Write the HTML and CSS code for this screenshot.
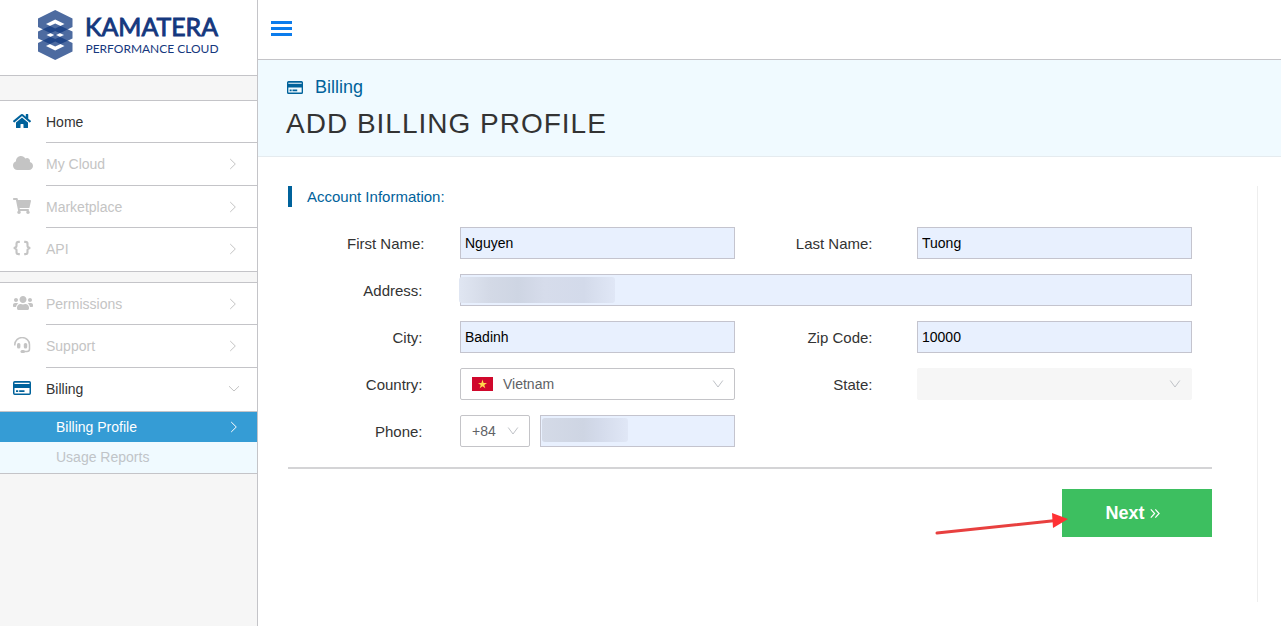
FILE: index.html
```html
<!DOCTYPE html>
<html lang="en">
<head>
<meta charset="utf-8">
<title>Add Billing Profile</title>
<link rel="stylesheet" href="styles.css">
</head>
<body>
<svg width="0" height="0" class="defs">
  <symbol id="card" viewBox="0 0 18 14"><path fill-rule="evenodd" d="M1.7 0H16.3Q18 0 18 1.7V12.3Q18 14 16.3 14H1.7Q0 14 0 12.3V1.7Q0 0 1.7 0ZM1.5 1.8V3H16.5V1.8ZM1.5 7V12.4H16.5V7ZM3 9.2H5.200V11H3ZM6.2 9.2H11.500V11H6.200Z"/></symbol>
  <symbol id="right" viewBox="0 0 8 12"><path d="M1.2 1 6.300 6 1.200 11" fill="none" stroke="currentColor" stroke-width="1"/></symbol>
  <symbol id="down" viewBox="0 0 12 8"><path d="M1 1.200 6 6 11 1.200" fill="none" stroke="currentColor" stroke-width="1"/></symbol>
  <symbol id="arrow" viewBox="0 0 12 10"><path d="M1.2 1.500 6 8 10.800 1.500" fill="none" stroke="currentColor" stroke-width="1"/></symbol>
</svg>
<div class="app">
  <aside class="sidebar">
    <div class="logo">
      <svg width="257" height="75">
        <g fill="#123a80" fill-opacity=".75" fill-rule="evenodd">
          <path d="M38 18.500 55.200 10 72.500 18.500V27L55.200 35.500 38 27ZM46 24 55.200 28.500 64.500 24 55.200 19.500Z"/>
          <path d="M38 31.500 55.200 23.500 72.500 31.500V38.500L55.200 46.500 38 38.500ZM46.500 35 55.200 39 64 35 55.200 31Z"/>
          <path d="M38 43 55.200 34.500 72.500 43V51.500L55.200 60 38 51.500ZM46 46 55.200 50.500 64.500 46 55.200 41.500Z"/>
        </g>
        <text class="brand" x="85" y="36" textLength="133" lengthAdjust="spacingAndGlyphs">KAMATERA</text>
        <text class="tagline" x="85.500" y="53.300" textLength="133" lengthAdjust="spacingAndGlyphs">PERFORMANCE CLOUD</text>
      </svg>
    </div>
    <nav class="group">
      <a class="item on"><svg class="icon" width="18" height="16" viewBox="0 0 576 512"><path d="M280.370 148.260L96 300.110V464a16 16 0 0 0 16 16l112.060-.29a16 16 0 0 0 15.920-16V368a16 16 0 0 1 16-16h64a16 16 0 0 1 16 16v95.640a16 16 0 0 0 16 16.050L464 480a16 16 0 0 0 16-16V300L295.670 148.260a12.190 12.190 0 0 0-15.300 0zM571.600 251.470L488 182.560V44.050a12 12 0 0 0-12-12h-56a12 12 0 0 0-12 12v72.610L318.470 43a48 48 0 0 0-61 0L4.340 251.470a12 12 0 0 0-1.600 16.900l25.500 31A12 12 0 0 0 45.150 301l235.220-193.740a12.190 12.190 0 0 1 15.300 0L530.900 301a12 12 0 0 0 16.900-1.600l25.500-31a12 12 0 0 0-1.700-16.930z"/></svg><span class="name">Home</span></a>
      <a class="item tall"><svg class="icon" width="20" height="16" viewBox="0 0 640 512"><path d="M537.600 226.600c4.100-10.700 6.400-22.400 6.400-34.600 0-53-43-96-96-96-19.700 0-38.100 6-53.300 16.200C367 64.200 315.300 32 256 32c-88.400 0-160 71.600-160 160 0 2.700.1 5.400.2 8.100C40.200 219.800 0 273.200 0 336c0 79.500 64.500 144 144 144h368c70.700 0 128-57.300 128-128 0-61.900-44-113.600-102.400-125.400z"/></svg><span class="name">My Cloud<svg class="chev" width="8" height="12"><use href="#right"/></svg></span></a>
      <a class="item"><svg class="icon" width="18" height="16" viewBox="0 0 576 512"><path d="M528.120 301.319l47.273-208C578.806 78.301 567.391 64 551.990 64H159.208l-9.166-44.810C147.758 8.021 137.930 0 126.529 0H24C10.745 0 0 10.745 0 24v16c0 13.255 10.745 24 24 24h69.883l70.248 343.435C147.325 417.100 136 435.222 136 456c0 30.928 25.072 56 56 56s56-25.072 56-56c0-15.674-6.447-29.835-16.824-40h209.647C430.447 426.165 424 440.326 424 456c0 30.928 25.072 56 56 56s56-25.072 56-56c0-22.172-12.888-41.332-31.579-50.405l5.517-24.276c3.413-15.018-8.002-29.319-23.403-29.319H218.117l-6.545-32h293.145c11.206 0 20.920-7.754 23.403-18.681z"/></svg><span class="name">Marketplace<svg class="chev" width="8" height="12"><use href="#right"/></svg></span></a>
      <a class="item last"><svg class="icon" width="18" height="16" viewBox="0 0 18 16"><path fill="none" stroke="currentColor" stroke-width="2.100" d="M6.800 1.900H5.500Q3.500 1.900 3.500 3.700V6Q3.500 7.500 .8 8 3.500 8.500 3.500 10V12.300Q3.500 14.100 5.500 14.100H6.800M11.200 1.900H12.500Q14.500 1.900 14.500 3.700V6Q14.500 7.500 17.200 8 14.500 8.500 14.500 10V12.300Q14.500 14.100 12.500 14.100H11.200"/></svg><span class="name">API<svg class="chev" width="8" height="12"><use href="#right"/></svg></span></a>
    </nav>
    <nav class="group second">
      <a class="item"><svg class="icon" width="20" height="16" viewBox="0 0 640 512"><path d="M96 224c35.300 0 64-28.700 64-64s-28.700-64-64-64-64 28.700-64 64 28.700 64 64 64zm448 0c35.300 0 64-28.700 64-64s-28.700-64-64-64-64 28.700-64 64 28.700 64 64 64zm32 32h-64c-17.600 0-33.500 7.100-45.100 18.600 40.300 22.100 68.900 62 75.100 109.400h66c17.700 0 32-14.300 32-32v-32c0-35.300-28.700-64-64-64zm-256 0c61.900 0 112-50.100 112-112S381.900 32 320 32 208 82.100 208 144s50.100 112 112 112zm76.800 32h-8.300c-20.800 10-43.900 16-68.500 16s-47.600-6-68.500-16h-8.300C179.600 288 128 339.600 128 403.200V432c0 26.500 21.500 48 48 48h288c26.500 0 48-21.500 48-48v-28.800c0-63.600-51.600-115.200-115.200-115.200zm-223.700-13.400C161.500 263.100 145.600 256 128 256H64c-35.300 0-64 28.700-64 64v32c0 17.700 14.300 32 32 32h65.900c6.300-47.400 34.900-87.300 75.200-109.400z"/></svg><span class="name">Permissions<svg class="chev" width="8" height="12"><use href="#right"/></svg></span></a>
      <a class="item tall"><svg class="icon" width="18" height="16" viewBox="-1 0 18 16"><path fill="none" stroke="currentColor" stroke-width="1.500" d="M.8 8.500V7.700a7.200 7 0 0 1 14.700 0V12Q15.500 14.500 13 14.500H9"/><rect x="3" y="6" width="3.400" height="5.400" rx="1.500"/><rect x="9.800" y="6" width="3.400" height="5.400" rx="1.500"/><rect x="6.500" y="13" width="4.500" height="3" rx="1.500"/></svg><span class="name">Support<svg class="chev" width="8" height="12"><use href="#right"/></svg></span></a>
      <a class="item last on"><svg class="icon" width="18" height="14"><use href="#card"/></svg><span class="name">Billing<svg class="chev wide" width="12" height="8"><use href="#down"/></svg></span></a>
      <div class="sub active">Billing Profile<svg class="chev" width="8" height="12"><use href="#right"/></svg></div>
      <div class="sub">Usage Reports</div>
    </nav>
  </aside>
  <main class="main">
    <header class="topbar"><span class="burger"><i></i><i></i><i></i></span></header>
    <section class="hero">
      <div class="crumb"><svg width="16" height="13" viewBox="0 0 18 14" preserveAspectRatio="none"><use href="#card" width="18" height="14"/></svg>Billing</div>
      <h1>ADD BILLING PROFILE</h1>
    </section>
    <section class="panel">
      <h2>Account Information:</h2>
      <form class="form">
        <label class="wide-label" for="first">First Name:</label><input id="first" value="Nguyen">
        <label for="last">Last Name:</label><input id="last" value="Tuong">
        <label for="address">Address:</label><div class="masked full"><input id="address"><span class="mask address-mask"></span></div>
        <label for="city">City:</label><input id="city" value="Badinh">
        <label for="zip">Zip Code:</label><input id="zip" value="10000">
        <label>Country:</label>
        <div class="select"><svg class="flag" width="21" height="14"><rect width="21" height="14" fill="#d0082c"/><path fill="#ffd84d" d="M10.500 2.600 11.600 5.900H15L12.300 8 13.300 11.300 10.500 9.300 7.700 11.300 8.700 8 6 5.900H9.400Z"/></svg>Vietnam<svg class="arrow" width="12" height="10"><use href="#arrow"/></svg></div>
        <label>State:</label>
        <div class="select disabled"><svg class="arrow" width="12" height="10"><use href="#arrow"/></svg></div>
        <label for="phone">Phone:</label>
        <div class="phone"><div class="select code">+84<svg class="arrow" width="12" height="10"><use href="#arrow"/></svg></div><div class="masked"><input id="phone"><span class="mask phone-mask"></span></div></div>
      </form>
      <div class="actions">
        <button class="next" type="button">Next<svg width="10" height="9" viewBox="0 0 10 9"><path d="M.8.4 4.600 4.500.8 8.600M5.300.4 9.100 4.500 5.300 8.600" fill="none" stroke="#fff" stroke-width="1.200"/></svg></button>
        <svg class="pointer" width="136" height="26"><path d="M2 20 121 7.500" stroke="#e8403f" stroke-width="3" stroke-linecap="round"/><path d="M117 0 133 6 118 15Z" fill="#ff3134"/></svg>
      </div>
    </section>
  </main>
</div>
</body>
</html>
```

FILE: styles.css
```css
* { box-sizing: border-box; }
body { margin: 0; font-family: "Liberation Sans", Arial, sans-serif; color: #333; background: #fff; }
.defs { position: absolute; }
svg { display: block; flex: none; fill: currentColor; }
.app { display: flex; width: 1281px; height: 626px; overflow: hidden; }

.sidebar { width: 258px; flex: none; background: #f6f6f6; border-right: 1px solid #c4c4c8; }
.logo { height: 76px; background: #fff; border-bottom: 1px solid #c4c4c8; }
.brand { font: 400 24.800px Lato, sans-serif; fill: #15387e; stroke: #15387e; stroke-width: .9px; }
.tagline { font: 400 12.200px Lato, sans-serif; fill: #15387e; }
.group { margin-top: 24px; background: #fff; border-top: 1px solid #c4c4c8; border-bottom: 1px solid #c4c4c8; }
.second { margin-top: 10px; }
.item { display: flex; align-items: center; height: 42px; padding-left: 13px; color: #c4c4c4; font-size: 14px; }
.item .name { display: flex; align-items: center; justify-content: space-between; align-self: stretch; flex: 1; padding: 1px 20px 0 0; border-bottom: 1px solid #c4c4c8; }
.item .icon { margin: 0 15px 2px 0; }
.item .icon[width="20"] { margin-right: 13px; }
.item.tall { height: 43px; }
.item.tall .name { padding-top: 0; padding-bottom: 1px; }
.item.tall .icon { margin-bottom: 3px; }
.item.last { height: 43px; }
.item.last .name { border-bottom: 0; padding: 0 20px 1px 0; }
.second .item.last { height: 44px; border-bottom: 1px solid #c4c4c8; }
.item.last .icon { margin-bottom: 3px; }
.item.on { color: #00629b; }
.item.on .name { color: #333; }
.item.on .chev { color: #c4c4c4; }
.item .chev.wide { margin-right: -3px; }
.sub { display: flex; align-items: center; justify-content: space-between; height: 31px; padding: 0 19px 1px 56px; background: #f0faff; color: #c0c4c8; font-size: 14px; }
.sub.active { height: 30px; padding: 0 19px 0 56px; background: #359cd5; color: #fff; }

.main { flex: 1; min-width: 0; }
.topbar { height: 60px; border-bottom: 1px solid #c4c4c8; padding: 21px 13px; }
.burger { display: flex; flex-direction: column; gap: 3px; width: 21px; }
.burger i { height: 3px; background: #0c7cec; }
.hero { height: 97px; padding: 17px 28px 0; background: #f0faff; border-bottom: 1px solid #e5ebef; }
.crumb { display: flex; align-items: center; gap: 12px; height: 20px; padding-left: 1px; color: #00629b; font-size: 18px; }
h1 { margin: 11px 0 0; font-size: 28px; line-height: 32px; font-weight: 400; letter-spacing: 1px; white-space: nowrap; }
.panel { width: 970px; height: 416px; margin: 29px 0 0 30px; border-right: 1px solid #eee; padding-right: 45px; }
h2 { margin: 0; height: 21px; padding-left: 15px; border-left: 4px solid #00629b; color: #00629b; font-size: 15px; line-height: 22px; font-weight: 400; }
.form { display: grid; grid-template-columns: 172px 275px 182px 275px; grid-auto-rows: 32px; row-gap: 15px; margin-top: 20px; padding-bottom: 20px; width: 924px; border-bottom: 2px solid #d4d4d6; }
label { padding: 1px 37.500px 0 0; text-align: right; font-size: 15px; line-height: 32px; }
label:nth-of-type(2), label:nth-of-type(5), label:nth-of-type(7) { padding-right: 44.500px; }
.wide-label { padding-right: 35.500px; }
input { width: 100%; height: 32px; margin: 0; padding: 0 4px; border: 1px solid #c4c4ce; border-radius: 0; background: #e8f0fe; color: #000; font: 14px "Liberation Sans", Arial, sans-serif; }
.full { grid-column: span 3; }
.masked { position: relative; flex: 1; }
.mask { position: absolute; border-radius: 3px; }
.address-mask { left: -1px; top: 3px; width: 156px; height: 26px; background: linear-gradient(90deg, #e0e6f2, #d3d9e6 20%, #ced5e3 38%, #d6dceb 55%, #d3daea 80%, #e0e7f6); }
.phone-mask { left: 2px; top: 3px; width: 86px; height: 24px; background: linear-gradient(90deg, #d4dae7, #ced5e3 48%, #d3daea 65%, #e0e7f6); }
.select { display: flex; align-items: center; height: 32px; padding: 0 10px 0 11px; border: 1px solid #c4c4c8; border-radius: 2px; color: #606266; font-size: 14px; }
.select .arrow { margin-left: auto; color: #bfc2c7; }
.flag { margin-right: 10px; }
.disabled { background: #f6f6f6; border-color: #f6f6f6; }
.phone { display: flex; gap: 10px; }
.code { width: 70px; }
.actions { display: flex; justify-content: flex-end; width: 924px; padding-top: 20px; position: relative; }
.next { display: flex; align-items: center; justify-content: center; gap: 5px; width: 150px; height: 48px; padding: 0 9px 0 0; border: 0; background: #3dbf60; color: #fff; font: bold 18px "Liberation Sans", Arial, sans-serif; }
.pointer { position: absolute; left: 647px; top: 44px; fill: none; }
```
